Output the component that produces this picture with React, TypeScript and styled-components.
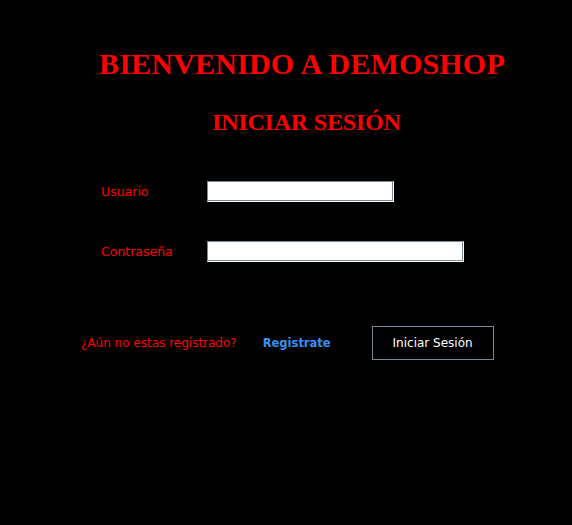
import React from "react";
import styled, { createGlobalStyle } from "styled-components";

const GlobalStyle = createGlobalStyle`
  html, body {
    margin: 0;
    padding: 0;
    background: #000;
  }
  #root {
    min-height: 100vh;
    background: #000;
  }
`;

const Page = styled.div`
  padding-top: 49px;
  font-family: "DejaVu Sans", sans-serif;
`;

const Title = styled.h1`
  margin: 0 0 0 99px;
  font-family: "Liberation Serif", "Times New Roman", serif;
  font-size: 30px;
  line-height: 30px;
  letter-spacing: 0.2px;
  font-weight: bold;
  color: #ff0000;
  white-space: nowrap;
`;

const Subtitle = styled.h2`
  margin: 31px 0 0 212px;
  font-family: "Liberation Serif", "Times New Roman", serif;
  font-size: 24px;
  line-height: 24px;
  letter-spacing: -0.2px;
  font-weight: bold;
  color: #ff0000;
  white-space: nowrap;
`;

const Form = styled.form`
  margin-top: 47px;
  padding-left: 101px;
  display: flex;
  flex-direction: column;
  gap: 39px;
`;

const Row = styled.div`
  display: flex;
  align-items: center;
  height: 21px;
`;

const Label = styled.label`
  width: 106px;
  font-size: 12.5px;
  color: #ff0000;
`;

const Field = styled.input<{ $width: number }>`
  box-sizing: border-box;
  width: ${(p) => p.$width}px;
  height: 21px;
  margin: 0;
  padding: 0 3px;
  background: #fff;
  border-style: solid;
  border-width: 1px;
  border-color: #7a8794 #fff #fff #7a8794;
  box-shadow: inset -1px -1px 0 #7a8794;
  outline: none;
  font-family: "DejaVu Sans", sans-serif;
  font-size: 12px;
`;

const Footer = styled.div`
  margin-top: 64px;
  padding-left: 81px;
  display: flex;
  align-items: center;
`;

const Question = styled.span`
  font-size: 12px;
  color: #ff0000;
  white-space: nowrap;
`;

const RegisterLink = styled.a`
  margin-left: 26px;
  font-size: 11.5px;
  font-weight: bold;
  color: #3592f5;
  text-decoration: none;
  cursor: pointer;
`;

const SubmitButton = styled.button`
  margin-left: 41px;
  box-sizing: border-box;
  width: 122px;
  height: 34px;
  padding: 0;
  background: #000;
  border: 1px solid #7a8794;
  color: #fff;
  font-family: "DejaVu Sans", sans-serif;
  font-size: 12px;
  cursor: pointer;
`;

export default function App() {
  return (
    <>
      <GlobalStyle />
      <Page>
        <Title>BIENVENIDO A DEMOSHOP</Title>
        <Subtitle>INICIAR SESIÓN</Subtitle>
        <Form onSubmit={(e) => e.preventDefault()}>
          <Row>
            <Label htmlFor="usuario">Usuario</Label>
            <Field id="usuario" type="text" $width={187} />
          </Row>
          <Row>
            <Label htmlFor="clave">Contraseña</Label>
            <Field id="clave" type="password" $width={257} />
          </Row>
        </Form>
        <Footer>
          <Question>¿Aún no estas registrado?</Question>
          <RegisterLink>Registrate</RegisterLink>
          <SubmitButton type="button">Iniciar Sesión</SubmitButton>
        </Footer>
      </Page>
    </>
  );
}
